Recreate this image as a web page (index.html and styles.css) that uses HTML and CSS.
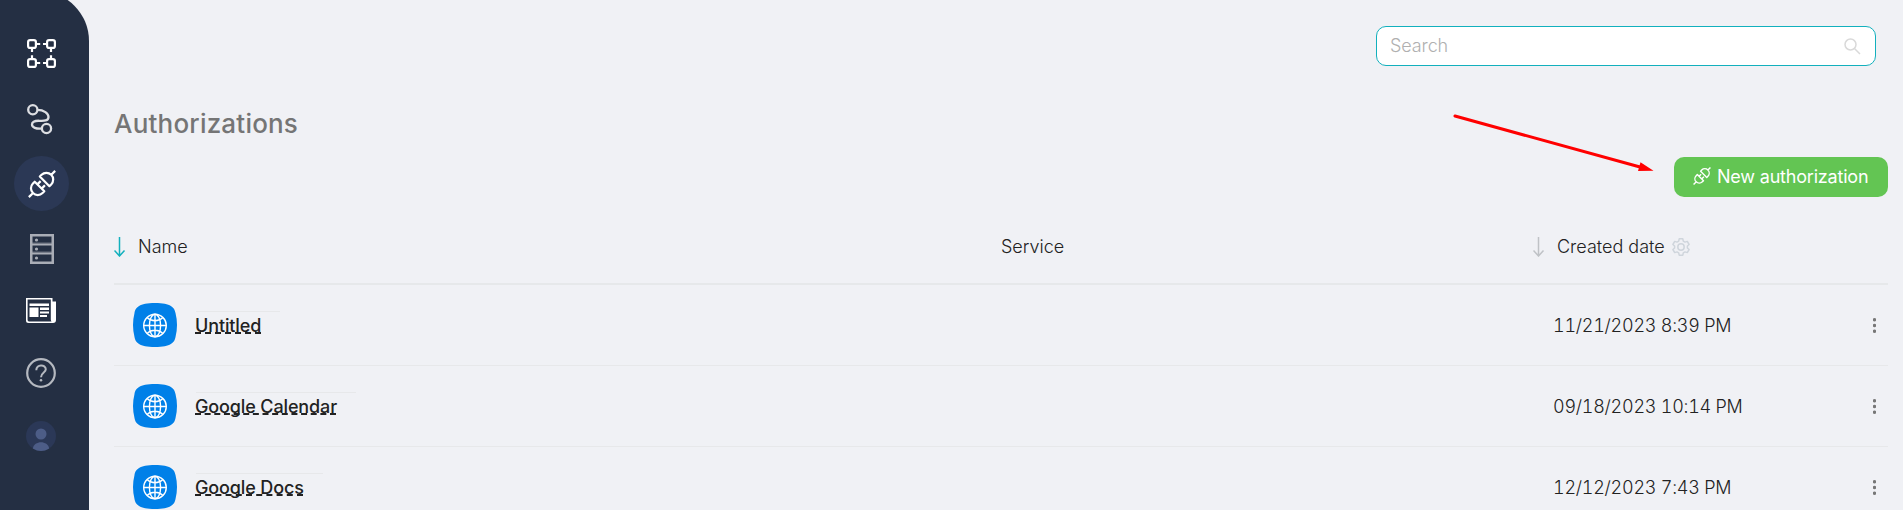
FILE: index.html
```html
<!DOCTYPE html>
<html lang="en">
<head>
<meta charset="utf-8">
<title>Authorizations</title>
<link rel="stylesheet" href="styles.css">
</head>
<body>
<svg class="defs" aria-hidden="true">
  <symbol id="plug" viewBox="0 0 28 28">
    <g fill="none" stroke="currentColor" stroke-width="2.200" stroke-linejoin="round" stroke-linecap="square" transform="rotate(-45 14 14)">
      <path d="M-3.500 14H1M8 7.200H10.500V20.800H8A6.800 6.800 0 0 1 8 7.200ZM10.500 11H14M10.500 17H14M17.700 7.200H20.200A6.800 6.800 0 0 1 20.200 20.800H17.700ZM27.500 14H31.500"/>
    </g>
  </symbol>
  <symbol id="globe" viewBox="0 0 24 24">
    <g fill="none" stroke="#fff" stroke-width="1.400">
      <circle cx="12" cy="12" r="11.300"/><ellipse cx="12" cy="12" rx="5.600" ry="11.300"/>
      <path d="M12 .7V23.300M.7 12H23.300M4 4C8.500 8.300 15.500 8.300 20 4M4 20C8.500 15.700 15.500 15.700 20 20"/>
    </g>
  </symbol>
  <symbol id="tile" viewBox="0 0 44 44">
    <path fill="#0080e8" d="M22 0C38 0 41.500 4.500 42.500 10C44.500 18 44.500 26 42.500 34C41.500 39.500 38 44 22 44S2.500 39.500 1.500 34C-.5 26-.5 18 1.500 10C2.500 4.500 6 0 22 0Z"/>
    <use href="#globe" x="10" y="10" width="24" height="25"/>
  </symbol>
  <symbol id="down" viewBox="0 0 12 20">
    <path fill="none" stroke="currentColor" stroke-width="1.500" d="M5.500 0V19M.5 13.500L5.500 19L10.500 13.500"/>
  </symbol>
  <symbol id="dots" viewBox="0 0 3 15">
    <g fill="#777"><circle cx="1.500" cy="1.700" r="1.700"/><circle cx="1.500" cy="7.500" r="1.700"/><circle cx="1.500" cy="13.300" r="1.700"/></g>
  </symbol>
</svg>
<div class="app">
  <nav class="sidebar">
    <a class="nav scenarios"><svg width="30" height="30" viewBox="0 0 30 30" fill="none" stroke="#fff" stroke-width="2.200">
      <rect x="1.100" y="1.100" width="7.800" height="7.800" rx="2"/><rect x="20.100" y="1.100" width="7.800" height="7.800" rx="2"/><rect x="1.100" y="20.100" width="7.800" height="7.800" rx="2"/><rect x="20.100" y="20.100" width="7.800" height="7.800" rx="2"/>
      <path d="M9 5H13.200M16 5H20M9 24H13.200M16 24H20M5 9V13M5 16.200V20M24 9V13M24 16.200V20"/></svg></a>
    <a class="nav templates"><svg width="26" height="31" viewBox="0 0 26 31" fill="none" stroke="#dcdee2" stroke-width="2.300">
      <circle cx="5.800" cy="5.800" r="4.600"/><circle cx="19.500" cy="24.500" r="4.600"/>
      <path d="M10.400 5.800C17 5.800 21.500 9.500 21.500 13C21.500 17 17 17 12.500 16.800C7 16.500 5 18.500 5 20.500C5 23.500 9 25 14.900 24.500"/></svg></a>
    <a class="nav active"><svg width="28" height="28"><use href="#plug"/></svg></a>
    <a class="nav webhooks"><svg width="24" height="30" viewBox="0 0 24 30" fill="none" stroke="#a9adb6">
      <path stroke-width="2" d="M1 1H23V29H1ZM2 10.500H22M2 19.500H22"/><path stroke-width="1" opacity=".5" d="M2.500 2V28M21.500 2V28M2 2.500H22M2 27.500H22M2 9H22M2 18H22"/>
      <g fill="#a9adb6" stroke="none"><circle cx="6.500" cy="6" r="1.600"/><circle cx="6.500" cy="15" r="1.600"/><circle cx="6.500" cy="24" r="1.600"/></g></svg></a>
    <a class="nav news"><svg width="30" height="25" viewBox="0 0 30 25" fill="#fff">
      <path fill-rule="evenodd" d="M0 0H26.500V3.500H30V22Q30 25 27 25H2.500Q0 25 0 22.500ZM1.600 1.600V22Q1.600 23.400 3 23.400H25.500Q24.800 22.800 24.800 21.500V1.600Z"/>
      <path d="M3.500 5.500H23V8H3.500ZM3.500 9.500H12.500V19H3.500ZM14 9.500H23V12H14ZM14 13.500H23V15.500H14ZM14 17H21V19H14Z"/></svg></a>
    <a class="nav help"><svg width="30" height="30" viewBox="0 0 30 30" fill="none" stroke="#b5b9c0" stroke-width="2.200">
      <circle cx="15" cy="15" r="13.800"/><path d="M10.300 12.200C10 6 19.800 6 19.800 11.300C19.800 14.500 15 14.500 15 19.200" stroke-width="2"/><circle cx="15" cy="22.300" r="1.300" fill="#b5b9c0" stroke="none"/></svg></a>
    <a class="nav user"><svg width="30" height="30" viewBox="0 0 30 30">
      <circle cx="15" cy="15" r="15" fill="#2b3857"/><circle cx="15" cy="13" r="5.500" fill="#4d5d87"/><path d="M6.800 27.500C8 19 22 19 23.200 27.500Q15 32.500 6.800 27.500Z" fill="#4d5d87"/></svg></a>
  </nav>
  <main class="content">
    <div class="topbar">
      <label class="search"><span>Search</span><svg width="17" height="17" viewBox="0 0 17 17" fill="none" stroke="#d9d9d9" stroke-width="1.500"><circle cx="6.500" cy="6.500" r="5.500"/><path d="M10.500 10.500L16 16"/></svg></label>
    </div>
    <h1 class="title">Authorizations</h1>
    <div class="actions"><button class="new"><svg width="18" height="18"><use href="#plug"/></svg><span>New authorization</span></button></div>
    <div class="thead">
      <div class="col-name"><svg class="sort on" width="12" height="20"><use href="#down"/></svg><span class="h-name">Name</span></div>
      <div class="col-service"><span class="h-service">Service</span></div>
      <div class="col-date"><svg class="sort" width="12" height="20"><use href="#down"/></svg><span class="h-date">Created date</span>
        <svg class="gear" width="18" height="18" viewBox="0 0 18 18" fill="none" stroke="#cfd5dc" stroke-width="1.500" stroke-linejoin="round"><circle cx="9" cy="9" r="3.200"/><path d="M7.200.8H10.800L11.300 3.100L13 4.100L15.300 3.400L17.100 6.500L15.400 8V10L17.100 11.500L15.300 14.600L13 13.900L11.300 14.900L10.800 17.200H7.200L6.700 14.900L5 13.900L2.700 14.600L.9 11.500L2.600 10V8L.9 6.500L2.700 3.400L5 4.100L6.700 3.100Z"/></svg></div>
    </div>
    <div class="row">
      <div class="col-name"><svg class="tile" width="44" height="44"><use href="#tile"/></svg><div class="label"><span>Untitled</span></div></div>
      <div class="col-service"></div>
      <div class="col-date"><span class="date">11/21/2023 8:39 PM</span><svg class="more" width="3" height="15"><use href="#dots"/></svg></div>
    </div>
    <div class="row">
      <div class="col-name"><svg class="tile" width="44" height="44"><use href="#tile"/></svg><div class="label"><span>Google Calendar</span></div></div>
      <div class="col-service"></div>
      <div class="col-date"><span class="date">09/18/2023 10:14 PM</span><svg class="more" width="3" height="15"><use href="#dots"/></svg></div>
    </div>
    <div class="row">
      <div class="col-name"><svg class="tile" width="44" height="44"><use href="#tile"/></svg><div class="label"><span>Google Docs</span></div></div>
      <div class="col-service"></div>
      <div class="col-date"><span class="date">12/12/2023 7:43 PM</span><svg class="more" width="3" height="15"><use href="#dots"/></svg></div>
    </div>
  </main>
  <svg class="pointer" width="206" height="62" viewBox="0 0 206 62"><path d="M5 3L190 54" stroke="#f00" stroke-width="3" stroke-linecap="round"/><path d="M190.500 49.300L203.500 57.700L188 58Z" fill="#f00"/></svg>
</div>
</body>
</html>
```
FILE: styles.css
```css
* { box-sizing: border-box; }
body { margin: 0; background: #f0f1f5; font-family: Inter, "Liberation Sans", sans-serif; color: #222; overflow: hidden; }
.defs { display: none; }
.app { display: flex; height: 510px; overflow: hidden; position: relative; }
.sidebar { width: 89px; height: 519px; margin-top: -9px; background: #242f43; border-top-right-radius: 50px; display: flex; flex-direction: column; align-items: flex-start; flex: none; }
.nav { display: block; color: #fff; margin-left: 26px; }
.nav svg { display: block; }
.scenarios { margin: 48px 0 0 27px; }
.templates { margin: 35px 0 0 27px; }
.active { width: 55px; height: 55px; border-radius: 50%; background: #2b3855; margin: 21px 0 0 14px; padding: 14px; }
.webhooks { margin: 23px 0 0 30px; }
.news { margin-top: 34px; }
.help { margin-top: 35px; }
.user { margin-top: 33px; }
.content { flex: 1; padding: 26px 15px 0 25px; }
.topbar { display: flex; justify-content: flex-end; padding-right: 12px; }
.search { width: 500px; height: 40px; background: #fff; border: 1px solid #12b0bd; border-radius: 10px; display: flex; align-items: center; justify-content: space-between; padding: 0 14px 2px 13px; font-size: 18px; font-weight: 300; color: #b0b0b0; letter-spacing: -.1px; }
.search svg { margin-top: 2px; }
.title { margin: 41px 0 0; height: 34px; line-height: 34px; font-size: 26px; font-weight: 450; color: #757575; letter-spacing: .2px; }
.actions { display: flex; justify-content: flex-end; margin-top: 16px; }
.new { width: 214px; height: 40px; border: 0; border-radius: 10px; background: #63c553; color: #fff; display: flex; align-items: center; gap: 6px; padding: 0 0 2px 19px; font: 400 18px Inter, sans-serif; letter-spacing: -.2px; white-space: nowrap; }
.thead { height: 88px; border-bottom: 2px solid #e6e8ea; display: flex; align-items: center; padding-top: 13px; font-size: 18px; font-weight: 300; }
.row { height: 81px; border-bottom: 1px solid #e7e8ea; display: flex; align-items: center; }
.col-name { width: 887px; display: flex; align-items: center; }
.col-service { width: 532px; }
.col-date { flex: 1; display: flex; align-items: center; }
.sort { color: #bfc2c6; margin-right: 12px; }
.sort.on { color: #12b0bd; }
.gear { margin-left: 7px; }
.tile { margin-left: 19px; }
.label { margin-left: 19px; padding: 3px 19px 0 0; border-top: 1px solid #e7e8ea; height: 28px; font-size: 18px; font-weight: 500; line-height: 22px; letter-spacing: -.13px; }
.label span { display: block; margin-left: -1px; text-decoration: underline dashed 2px; text-underline-offset: 0; text-decoration-skip-ink: none; }
.date { font-size: 18px; font-weight: 300; margin-left: 20px; font-variant-numeric: tabular-nums; letter-spacing: -.25px; }
.more { margin-left: auto; margin-right: 12px; }
.pointer { position: absolute; left: 1450px; top: 113px; }
```
